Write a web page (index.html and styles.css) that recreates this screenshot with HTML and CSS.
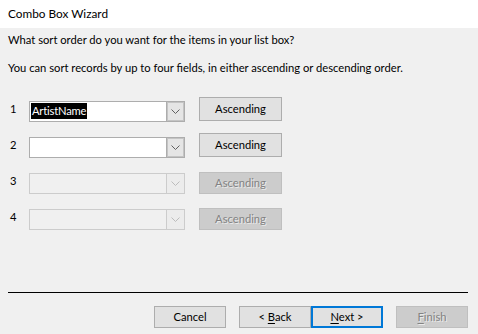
FILE: index.html
```html
<!DOCTYPE html>
<html>
<head>
<meta charset="utf-8">
<link rel="stylesheet" href="styles.css">
</head>
<body>
<div class="window">
  <div class="titlebar">Combo Box Wizard</div>
  <div class="content">
    <p class="line first">What sort order do you want for the items in your list box?</p>
    <p class="line second">You can sort records by up to four fields, in either ascending or descending order.</p>
    <div class="rows">
      <div class="row raised">
        <span class="num">1</span>
        <div class="combo"><div class="field"><span class="sel">ArtistName</span></div><div class="drop"><svg width="9" height="5" viewBox="0 0 9 5"><path d="M0.5 0.5 L4.5 4.5 L8.5 0.5" fill="none" stroke="#606060" stroke-width="1"/></svg></div></div>
        <div class="btn sort"><span>Ascending</span></div>
      </div>
      <div class="row raised">
        <span class="num">2</span>
        <div class="combo"><div class="field"></div><div class="drop"><svg width="9" height="5" viewBox="0 0 9 5"><path d="M0.5 0.5 L4.5 4.5 L8.5 0.5" fill="none" stroke="#606060" stroke-width="1"/></svg></div></div>
        <div class="btn sort"><span>Ascending</span></div>
      </div>
      <div class="row">
        <span class="num">3</span>
        <div class="combo disabled"><div class="field"></div><div class="drop"><svg width="9" height="5" viewBox="0 0 9 5"><path d="M0.5 0.5 L4.5 4.5 L8.5 0.5" fill="none" stroke="#bcbcbc" stroke-width="1"/></svg></div></div>
        <div class="btn sort disabled"><span>Ascending</span></div>
      </div>
      <div class="row">
        <span class="num">4</span>
        <div class="combo disabled"><div class="field"></div><div class="drop"><svg width="9" height="5" viewBox="0 0 9 5"><path d="M0.5 0.5 L4.5 4.5 L8.5 0.5" fill="none" stroke="#bcbcbc" stroke-width="1"/></svg></div></div>
        <div class="btn sort disabled"><span>Ascending</span></div>
      </div>
    </div>
    <div class="separator"></div>
    <div class="footer">
      <div class="btn"><span>Cancel</span></div>
      <div class="nav">
        <div class="btn"><span>&lt; <u>B</u>ack</span></div>
        <div class="btn default"><span><u>N</u>ext &gt;</span></div>
      </div>
      <div class="btn disabled"><span><u>F</u>inish</span></div>
    </div>
  </div>
</div>
</body>
</html>
```
FILE: styles.css
```css
html, body {
  margin: 0;
  padding: 0;
  background: #f0f0f0;
}
.window {
  width: 478px;
  height: 334px;
  font-family: Lato, "Noto Sans", sans-serif;
  font-size: 11.2px;
  color: #000;
  display: flex;
  flex-direction: column;
}
.titlebar {
  height: 28px;
  background: #fff;
  padding-left: 8px;
  line-height: 28px;
  font-size: 11.8px;
  box-sizing: border-box;
}
.content {
  flex: 1;
  background: #f0f0f0;
  padding-top: 4px;
}
.line {
  margin: 0;
  padding-left: 8px;
  line-height: 16px;
  white-space: nowrap;
}
.line.second {
  margin-top: 12px;
}
.rows {
  margin-top: 25px;
  display: flex;
  flex-direction: column;
}
.row {
  height: 36px;
  display: flex;
  align-items: flex-start;
}
.num {
  width: 29px;
  box-sizing: border-box;
  padding-left: 10px;
  line-height: 16px;
}
.combo {
  width: 156px;
  height: 21px;
  box-sizing: border-box;
  border: 1px solid #adadad;
  background: #fff;
  display: flex;
}
.combo .field {
  flex: 1;
  padding: 1px 0 0 1px;
}
.sel {
  display: inline-block;
  background: #000;
  color: #fff;
  line-height: 16px;
  padding: 0 1px;
  letter-spacing: -0.2px;
}
.combo .drop {
  width: 17px;
  background: #e5e5e5;
  border-left: 1px solid #adadad;
  box-shadow: inset 0 0 0 1px #c4c4c4;
  display: flex;
  align-items: center;
  justify-content: center;
}
.combo.disabled {
  background: #f0f0f0;
  border-color: #cccccc;
}
.combo.disabled .drop {
  background: #ececec;
  border-left-color: #cccccc;
  box-shadow: none;
}
.btn {
  width: 72px;
  height: 22px;
  box-sizing: border-box;
  background: #e1e1e1;
  border: 1px solid #adadad;
  display: flex;
  align-items: center;
  justify-content: center;
  line-height: 16px;
  white-space: pre;
}
.btn u {
  text-decoration-thickness: 1px;
  text-underline-offset: 2px;
}
.btn.sort {
  width: 83px;
  margin-left: 14px;
  margin-top: -1px;
  height: 22px;
}
.row.raised .btn.sort {
  margin-top: -4px;
  height: 24px;
}
.btn.disabled {
  background: #cccccc;
  border-color: #bfbfbf;
  color: #838383;
  text-shadow: 1px 1px 0 rgba(255, 255, 255, 0.6);
}
.btn.default {
  border: 2px solid #0078d7;
}
.separator {
  margin: 47px 0 0 8px;
  width: 460px;
  height: 1px;
  background: #000;
}
.footer {
  margin-top: 13px;
  padding-left: 154px;
  display: flex;
}
.nav {
  margin-left: 13px;
  display: flex;
}
.footer > .btn.disabled {
  margin-left: 13px;
}
```
